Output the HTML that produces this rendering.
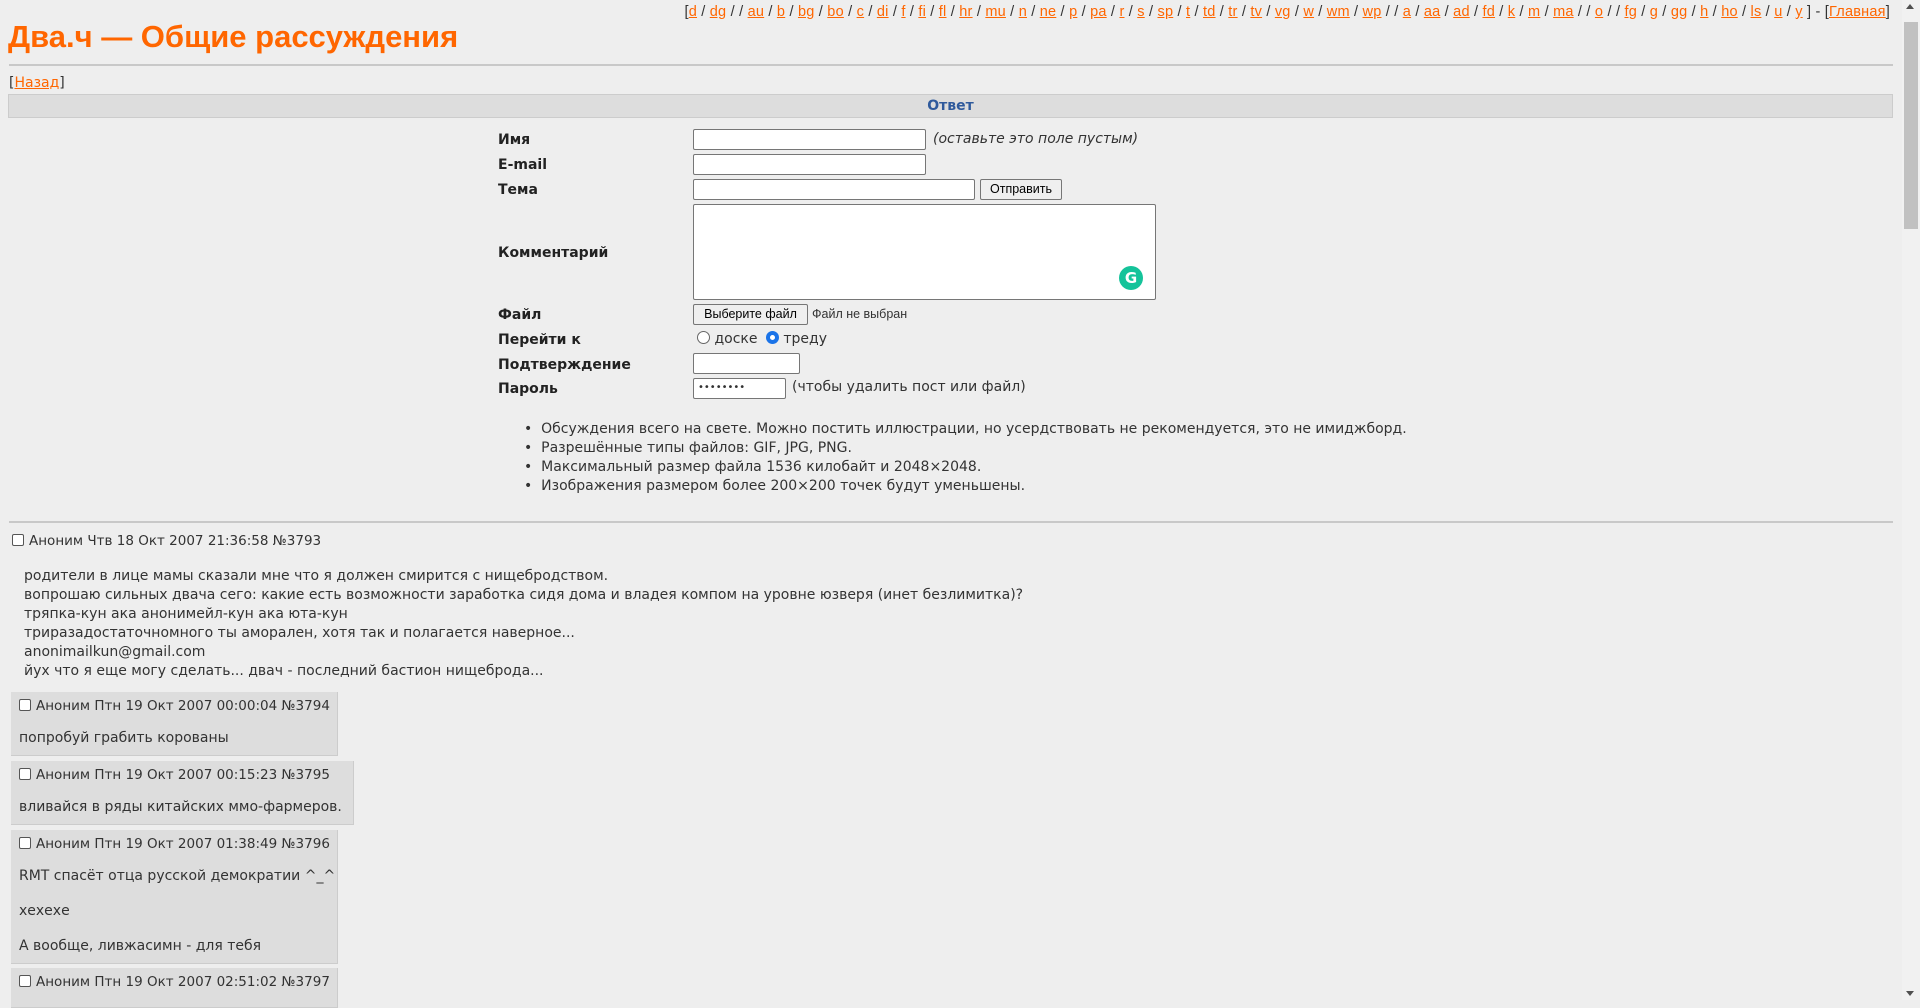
<!DOCTYPE html>
<html><head><meta charset="utf-8"><style>
*{box-sizing:border-box}
body{margin:0;width:1920px;height:1000px;overflow:hidden;background:#eeeeee;font-family:"DejaVu Sans","Liberation Sans",sans-serif;font-size:13.5px;color:#333;position:relative}
a{color:#ff6600;text-decoration:underline}
.abs{position:absolute;white-space:nowrap}
.nav{top:4px;right:30px;font-size:14.5px;color:#333;font-family:"Liberation Sans",sans-serif;letter-spacing:0.22px}
.title{left:8px;top:19px;font-size:31px;font-weight:bold;color:#ff6600;font-family:"Liberation Sans",sans-serif}
.hr{position:absolute;left:9px;width:1884px;height:2px;background:#c8c8c8}
.bar{left:8px;top:94px;width:1885px;height:24px;background:#dddddd;border:1px solid #ccc;text-align:center;color:#2f5a9c;font-weight:bold;line-height:22px;font-size:14px}
.lbl{left:498px;font-weight:bold;font-size:14px;color:#222}
.inp{position:absolute;background:#fff;border:1px solid #767676;border-radius:2px;height:21px}
.btn{position:absolute;background:#efefef;border:1px solid #767676;border-radius:2px;height:21px;font-size:12.5px;color:#000;text-align:center;line-height:19px;font-family:"Liberation Sans",sans-serif}
.rules{left:524px;top:420px;font-size:14px;line-height:19px}
.reply{position:absolute;left:11px;background:#dddddd;border:1px solid #ccc;border-top:none;border-left:none}
.cb{display:inline-block;width:12px;height:12px;border:1px solid #555;border-radius:2px;background:#fff;vertical-align:-1px;margin-right:5px}
.hd{position:absolute;left:8px;top:6px;white-space:nowrap}
.tx{position:absolute;left:8px;white-space:nowrap;font-size:14px}
</style></head><body>
<div class="abs nav">[<a>d</a> / <a>dg</a> / / <a>au</a> / <a>b</a> / <a>bg</a> / <a>bo</a> / <a>c</a> / <a>di</a> / <a>f</a> / <a>fi</a> / <a>fl</a> / <a>hr</a> / <a>mu</a> / <a>n</a> / <a>ne</a> / <a>p</a> / <a>pa</a> / <a>r</a> / <a>s</a> / <a>sp</a> / <a>t</a> / <a>td</a> / <a>tr</a> / <a>tv</a> / <a>vg</a> / <a>w</a> / <a>wm</a> / <a>wp</a> / / <a>a</a> / <a>aa</a> / <a>ad</a> / <a>fd</a> / <a>k</a> / <a>m</a> / <a>ma</a> / / <a>o</a> / / <a>fg</a> / <a>g</a> / <a>gg</a> / <a>h</a> / <a>ho</a> / <a>ls</a> / <a>u</a> / <a>y</a> ] - [<a>Главная</a>]</div>
<div class="abs title">Два.ч — Общие рассуждения</div>
<div class="hr" style="top:64px"></div>
<div class="abs" style="left:9px;top:75px;font-size:14px">[<a>Назад</a>]</div>
<div class="abs bar">Ответ</div>

<div class="abs lbl" style="top:132px">Имя</div>
<div class="inp" style="left:693px;top:129px;width:233px"></div>
<div class="abs" style="left:933px;top:131px;font-style:italic;font-size:14px">(оставьте это поле пустым)</div>
<div class="abs lbl" style="top:157px">E-mail</div>
<div class="inp" style="left:693px;top:154px;width:233px"></div>
<div class="abs lbl" style="top:182px">Тема</div>
<div class="inp" style="left:693px;top:179px;width:282px"></div>
<div class="btn" style="left:980px;top:179px;width:82px">Отправить</div>
<div class="abs lbl" style="top:245px">Комментарий</div>
<div class="inp" style="left:693px;top:204px;width:463px;height:96px"></div>
<div class="abs" style="left:1119px;top:266px;width:24px;height:24px;border-radius:12px;background:#15c39a;color:#fff;font-weight:bold;text-align:center;line-height:24px;font-size:15px">G</div>
<div class="abs lbl" style="top:307px">Файл</div>
<div class="btn" style="left:693px;top:304px;width:115px">Выберите файл</div>
<div class="abs" style="left:812px;top:307px;font-size:12.5px;font-family:'Liberation Sans',sans-serif">Файл не выбран</div>
<div class="abs lbl" style="top:332px">Перейти к</div>
<div class="abs" style="left:697px;top:331px;font-size:14px"><span style="display:inline-block;width:13px;height:13px;border:1px solid #666;border-radius:7px;background:#fff;vertical-align:-1px"></span> доске <span style="display:inline-block;width:13px;height:13px;border:4px solid #1a73e8;border-radius:7px;background:#fff;vertical-align:-1px;margin-left:4px"></span> треду</div>
<div class="abs lbl" style="top:357px">Подтверждение</div>
<div class="inp" style="left:693px;top:353px;width:107px"></div>
<div class="abs lbl" style="top:381px">Пароль</div>
<div class="inp" style="left:693px;top:378px;width:93px;font-size:10px;line-height:18px;padding-left:4px">••••••••</div>
<div class="abs" style="left:792px;top:379px;font-size:14px">(чтобы удалить пост или файл)</div>

<div class="abs rules">•&nbsp; Обсуждения всего на свете. Можно постить иллюстрации, но усердствовать не рекомендуется, это не имиджборд.<br>•&nbsp; Разрешённые типы файлов: GIF, JPG, PNG.<br>•&nbsp; Максимальный размер файла 1536 килобайт и 2048×2048.<br>•&nbsp; Изображения размером более 200×200 точек будут уменьшены.</div>
<div class="hr" style="top:521px"></div>

<div class="abs" style="left:12px;top:533px"><span class="cb"></span>Аноним Чтв 18 Окт 2007 21:36:58 №3793</div>
<div class="abs" style="left:24px;top:567px;line-height:19px;font-size:14px">родители в лице мамы сказали мне что я должен смирится с нищебродством.<br>вопрошаю сильных двача сего: какие есть возможности заработка сидя дома и владея компом на уровне юзверя (инет безлимитка)?<br>тряпка-кун ака анонимейл-кун ака юта-кун<br>триразадостаточномного ты аморален, хотя так и полагается наверное...<br>anonimailkun@gmail.com<br>йух что я еще могу сделать... двач - последний бастион нищеброда...</div>

<div class="reply" style="top:692px;width:327px;height:64px"><div class="hd"><span class="cb"></span>Аноним Птн 19 Окт 2007 00:00:04 №3794</div><div class="tx" style="top:38px">попробуй грабить корованы</div></div>
<div class="reply" style="top:761px;width:343px;height:64px"><div class="hd"><span class="cb"></span>Аноним Птн 19 Окт 2007 00:15:23 №3795</div><div class="tx" style="top:38px">вливайся в ряды китайских ммо-фармеров.</div></div>
<div class="reply" style="top:830px;width:327px;height:134px"><div class="hd"><span class="cb"></span>Аноним Птн 19 Окт 2007 01:38:49 №3796</div><div class="tx" style="top:38px">RMT спасёт отца русской демократии ^_^</div><div class="tx" style="top:73px">хехехе</div><div class="tx" style="top:108px">А вообще, ливжасимн - для тебя</div></div>
<div class="reply" style="top:968px;width:327px;height:40px"><div class="hd"><span class="cb"></span>Аноним Птн 19 Окт 2007 02:51:02 №3797</div></div>

<div class="abs" style="left:1902px;top:0;width:18px;height:1000px;background:#f1f1f1"></div>
<div class="abs" style="left:1904px;top:22px;width:14px;height:207px;background:#c1c1c1"></div>
<div class="abs" style="left:1906px;top:4px;width:0;height:0;border-left:4px solid transparent;border-right:4px solid transparent;border-bottom:5px solid #505050"></div>
<div class="abs" style="left:1906px;top:991px;width:0;height:0;border-left:4px solid transparent;border-right:4px solid transparent;border-top:5px solid #505050"></div>
</body></html>
